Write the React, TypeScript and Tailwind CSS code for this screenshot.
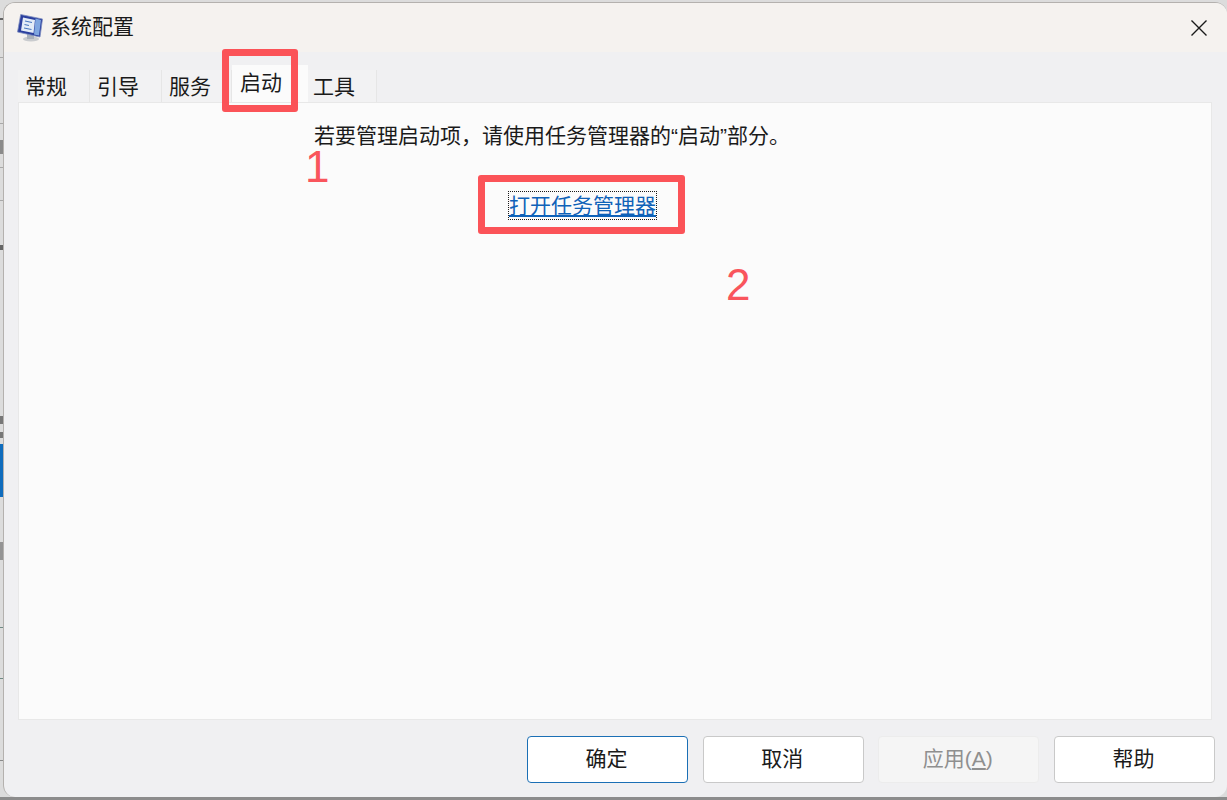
const tabs = ['常规', '引导', '服务'];

// bits of the window lying behind the dialog, seen in the strip on its left
const behind = [
  { top: 18, h: 2, color: '#666666' },
  { top: 57, h: 1, color: '#a8a8a8' },
  { top: 123, h: 1, color: '#a8a8a8' },
  { top: 140, h: 14, color: '#8a8a8a' },
  { top: 167, h: 1, color: '#a8a8a8' },
  { top: 200, h: 1, color: '#a8a8a8' },
  { top: 245, h: 5, color: '#666666' },
  { top: 416, h: 8, color: '#777777' },
  { top: 432, h: 6, color: '#777777' },
  { top: 444, h: 53, color: '#0f6cbd' },
  { top: 542, h: 18, color: '#949494' },
  { top: 627, h: 1, color: '#6f8a84' },
  { top: 678, h: 1, color: '#6f8a84' },
  { top: 760, h: 1, color: '#8a8a8a' },
];

const Btn = ({ label, className }: { label: React.ReactNode; className: string }) => (
  <div className={`w-[161px] h-[47px] rounded-[4px] border flex items-center justify-center text-[21px] pb-[2px] pr-[2px] ${className}`}>
    {label}
  </div>
);

const MsConfigIcon = () => (
  <svg width="26" height="28" viewBox="0 0 26 28">
    <ellipse cx="14" cy="25" rx="8" ry="2.6" fill="#c9cbce" />
    <path d="M10 20 L17 21 L17 25 L10 25 Z" fill="#a9b0ba" />
    <path d="M3.7 0.5 L25.5 5 L23 23 L0.5 18 Z" fill="#2b3f9e" stroke="#7f8fc0" strokeWidth="0.8" />
    <path d="M18.5 4.5 L24 6 L22 21.5 L17 20.5 Z" fill="#7fa6e0" />
    <path d="M6 3.5 L18 6 L16.5 19 L4 16.5 Z" fill="#e3ecf7" />
    <path d="M8 7 L15 8.5 M7.5 10.5 L12 11.5 M7 14 L14.5 15.5" stroke="#4a78c0" strokeWidth="1.1" />
  </svg>
);

export default function App() {
  return (
    <div
      className="relative w-[1227px] h-[800px] overflow-hidden bg-[#dcdcdc] pl-[3px] pt-[2px] text-[#1a1a1a]"
      style={{ fontFamily: '"Liberation Sans", "Noto Sans CJK SC", sans-serif' }}
    >
      {behind.map((b) => (
        <div
          key={b.top}
          className="absolute left-0 w-[3px]"
          style={{ top: b.top, height: b.h, backgroundColor: b.color }}
        />
      ))}
      <div className="absolute left-0 bottom-0 w-full h-[3px] bg-[#8c8c8c]" />

      <div className="relative w-[1224px] h-[795px] rounded-[12px] border-l border-t border-[#b4b1ae] bg-[#f0f0f2] flex flex-col overflow-hidden">
        {/* title bar */}
        <div className="h-[49px] shrink-0 bg-[#f5f2ef] flex items-center pl-[13px] pr-[19px]">
          <MsConfigIcon />
          <span className="ml-[7px] text-[21px] leading-none mb-[2px]">系统配置</span>
          <svg className="ml-auto" width="18" height="18" viewBox="0 0 18 18">
            <path d="M1.5 1.5 L16.5 16.5 M16.5 1.5 L1.5 16.5" stroke="#1a1a1a" strokeWidth="1.4" fill="none" />
          </svg>
        </div>

        {/* tabs */}
        <div className="h-[50px] shrink-0 flex items-end pl-[14px]">
          {tabs.map((t, i) => (
            <div
              key={t}
              className={`${i === 2 ? 'w-[70px]' : 'w-[72px]'} h-[32px] border-r border-[#e6e6e6] bg-[#f2f2f3] flex items-center pl-[7px] text-[21px] leading-none`}
            >
              {t}
            </div>
          ))}
          <div className="w-[76px] h-[37px] bg-[#fbfbfb] flex items-center pl-[8px] pb-[3px] text-[21px] leading-none">
            启动
          </div>
          <div className="w-[69px] h-[32px] border-r border-[#e6e6e6] bg-[#f2f2f3] flex items-center pl-[5px] text-[21px] leading-none">
            工具
          </div>
        </div>

        {/* panel */}
        <div className="ml-[14px] mr-[15px] h-[618px] shrink-0 bg-[#fbfbfb] border border-[#e8e8e8] flex flex-col">
          <p className="mt-[19px] ml-[295px] text-[21px] leading-[28px] whitespace-nowrap">
            若要管理启动项，请使用任务管理器的“启动”部分。
          </p>
          <div className="mt-[42px] ml-[490px] w-[147px] h-[27px] outline-1 outline-dotted outline-[#1a1a1a] flex items-center justify-center">
            <span className="text-[21px] leading-[27px] text-[#0f62b8] underline whitespace-nowrap">打开任务管理器</span>
          </div>
        </div>

        {/* buttons */}
        <div className="flex gap-[14.67px] pl-[523px] pt-[16px]">
          <Btn label="确定" className="bg-white border-[#1b6fb5]" />
          <Btn label="取消" className="bg-white border-[#c9c9c9]" />
          <Btn
            label={
              <span>
                应用(<span className="underline">A</span>)
              </span>
            }
            className="bg-[#f5f5f5] border-[#ececec] text-[#8f8f8f]"
          />
          <Btn label="帮助" className="bg-white border-[#c9c9c9]" />
        </div>
      </div>

      {/* red annotations */}
      <div className="absolute left-[222px] top-[49px] w-[76px] h-[63px] border-[7px] border-[#fb5358] rounded-[3px]" />
      <div className="absolute left-[478px] top-[175px] w-[207px] h-[59px] border-[7px] border-[#fb5358] rounded-[3px]" />
      <span className="absolute left-[305px] top-[150px] text-[44px] leading-[34px] text-[#f9555c]">1</span>
      <span className="absolute left-[726px] top-[268px] text-[44px] leading-[34px] text-[#f9555c]">2</span>
    </div>
  );
}
